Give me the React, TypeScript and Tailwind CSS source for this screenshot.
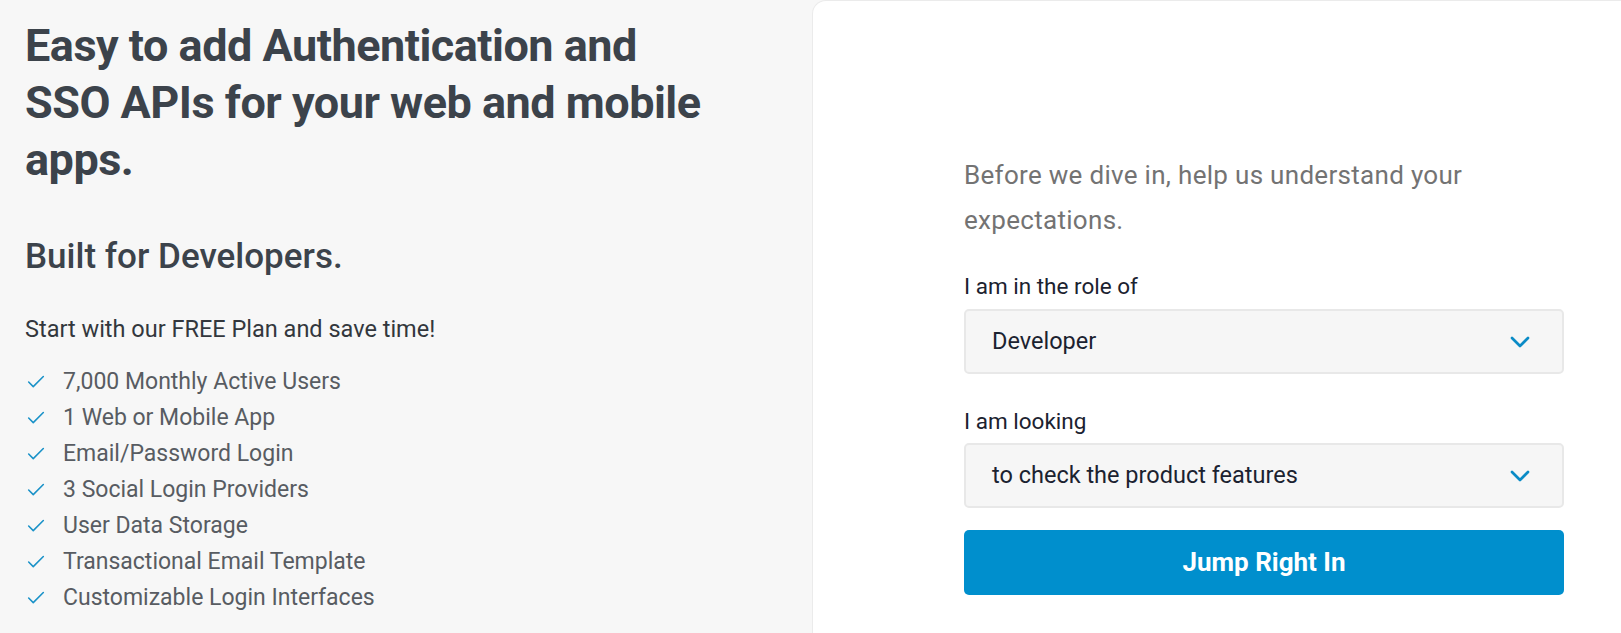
import { ChevronDown, Check } from 'lucide-react';

const features = [
  '7,000 Monthly Active Users',
  '1 Web or Mobile App',
  'Email/Password Login',
  '3 Social Login Providers',
  'User Data Storage',
  'Transactional Email Template',
  'Customizable Login Interfaces',
];

function SelectBox({ value }: { value: string }) {
  return (
    <div className="flex h-[65px] items-center justify-between rounded-[5px] border-2 border-[#e8e8e8] bg-[#f6f6f6] pl-[26px] pr-[26px]">
      <span className="text-[23.5px] text-[#1b2230]">{value}</span>
      <ChevronDown className="h-[32px] w-[32px] text-[#0a8bc6]" strokeWidth={2} />
    </div>
  );
}

export default function App() {
  return (
    <div
      className="flex h-[633px] w-full overflow-hidden bg-[#f7f7f7]"
      style={{ fontFamily: 'Roboto, "Noto Sans", sans-serif' }}
    >
      {/* left column */}
      <div className="w-[812px] shrink-0 pl-[25px] pt-[17px]">
        <h1 className="text-[45px] font-bold leading-[57px] tracking-[-0.5px] text-[#3c434b]">
          Easy to add Authentication and
          <br />
          SSO APIs for your web and mobile
          <br />
          apps.
        </h1>
        <h2 className="mt-[48px] text-[35px] font-medium leading-[42px] text-[#3c434b]">
          Built for Developers.
        </h2>
        <p className="mt-[36px] text-[23.5px] leading-[30px] text-[#33373d]">
          Start with our FREE Plan and save time!
        </p>
        <ul className="mt-[20px]">
          {features.map((f) => (
            <li key={f} className="flex h-[36px] items-center">
              <Check className="h-[22px] w-[22px] text-[#1a92c8]" strokeWidth={1.7} />
              <span className="ml-[16px] text-[23px] text-[#585c62]">{f}</span>
            </li>
          ))}
        </ul>
      </div>

      {/* right card */}
      <div className="flex-1 rounded-tl-[14px] border-l border-t border-[#ebebeb] bg-white pl-[151px] pt-[152px]">
        <div className="w-[600px]">
          <p className="w-[520px] text-[26px] leading-[45px] tracking-[0.3px] text-[#737373]">
            Before we dive in, help us understand your expectations.
          </p>
          <label className="mt-[29px] block text-[22.5px] leading-[28px] text-[#1b2230]">
            I am in the role of
          </label>
          <div className="mt-[9px]">
            <SelectBox value="Developer" />
          </div>
          <label className="mt-[33px] block text-[22.5px] leading-[28px] text-[#1b2230]">
            I am looking
          </label>
          <div className="mt-[8px]">
            <SelectBox value="to check the product features" />
          </div>
          <button className="mt-[22px] flex h-[65px] w-full items-center justify-center rounded-[5px] bg-[#008fcd] text-[26px] font-bold text-white">
            Jump Right In
          </button>
        </div>
      </div>
    </div>
  );
}
